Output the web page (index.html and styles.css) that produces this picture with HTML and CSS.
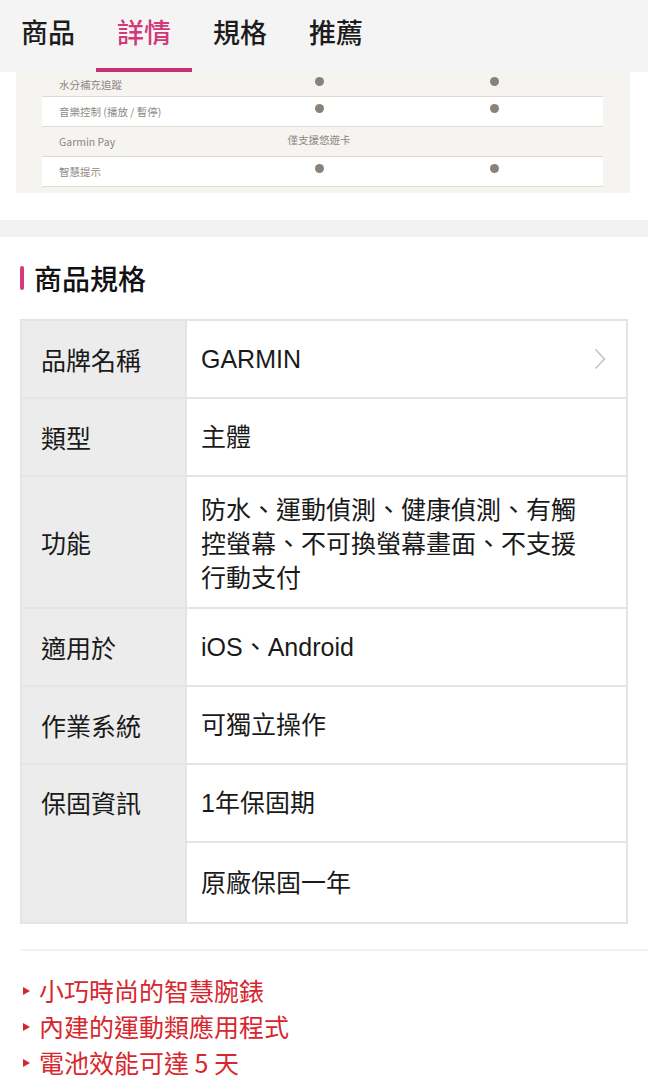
FILE: index.html
```html
<!DOCTYPE html>
<html lang="zh-Hant">
<head>
    <meta charset="UTF-8">
    <meta name="viewport" content="width=device-width, initial-scale=1.0">
    <title>商品規格</title>
    <link rel="stylesheet" href="styles.css">
</head>
<body>
    <!-- Tabs oben -->
    <nav class="tabs">
        <a class="tab">商品</a>
        <a class="tab active">詳情</a>
        <a class="tab">規格</a>
        <a class="tab">推薦</a>
    </nav>

    <!-- Vergleichstabelle (Bildausschnitt) -->
    <div class="compare">
        <div class="compare-row first">
            <span class="c-label">水分補充追蹤</span>
            <span class="c-val"><i class="dot"></i></span>
            <span class="c-val"><i class="dot"></i></span>
        </div>
        <div class="compare-row white">
            <span class="c-label">音樂控制 (播放 / 暫停)</span>
            <span class="c-val"><i class="dot"></i></span>
            <span class="c-val"><i class="dot"></i></span>
        </div>
        <div class="compare-row">
            <span class="c-label">Garmin Pay</span>
            <span class="c-val c-text">僅支援悠遊卡</span>
            <span class="c-val"></span>
        </div>
        <div class="compare-row white">
            <span class="c-label">智慧提示</span>
            <span class="c-val"><i class="dot"></i></span>
            <span class="c-val"><i class="dot"></i></span>
        </div>
    </div>

    <div class="divider-band"></div>

    <!-- Produktspezifikationen -->
    <section class="specs">
        <h2 class="section-title"><span class="title-bar"></span>商品規格</h2>

        <table class="spec-table">
            <tr>
                <th>品牌名稱</th>
                <td>
                    <div class="link-cell">
                        <span>GARMIN</span>
                        <svg class="chevron" width="12" height="22" viewBox="0 0 12 22">
                            <path d="M1.5 1.5 L10.5 11 L1.5 20.5" fill="none" stroke="#c4c4c4" stroke-width="1.6"/>
                        </svg>
                    </div>
                </td>
            </tr>
            <tr>
                <th>類型</th>
                <td>主體</td>
            </tr>
            <tr>
                <th>功能</th>
                <td class="multi">防水、運動偵測、健康偵測、有觸控螢幕、不可換螢幕畫面、不支援行動支付</td>
            </tr>
            <tr>
                <th>適用於</th>
                <td>iOS、Android</td>
            </tr>
            <tr>
                <th>作業系統</th>
                <td>可獨立操作</td>
            </tr>
            <tr>
                <th rowspan="2" class="top">保固資訊</th>
                <td>1年保固期</td>
            </tr>
            <tr class="last">
                <td>原廠保固一年</td>
            </tr>
        </table>

        <hr class="sep">

        <ul class="highlights">
            <li>小巧時尚的智慧腕錶</li>
            <li>內建的運動類應用程式</li>
            <li>電池效能可達 5 天</li>
        </ul>
    </section>
</body>
</html>
```

FILE: styles.css
```css
/* Grundlayout */
body {
    margin: 0;
    font-family: "Liberation Sans", "Noto Sans CJK TC", sans-serif;
    color: #1a1a1a;
    background: #ffffff;
    width: 648px;
    height: 1080px;
    overflow: hidden;
}

/* Tabs */
.tabs {
    display: flex;
    height: 72px;
    background-color: #f4f4f4;
    padding-left: 0;
    position: relative;
    z-index: 2;
}
.tab {
    width: 96px;
    box-sizing: border-box;
    display: flex;
    justify-content: center;
    align-items: center;
    padding-bottom: 6px;
    font-size: 27px;
    font-weight: 500;
    color: #1c1c1c;
    font-family: "Noto Sans CJK TC", sans-serif;
    border-bottom: 4px solid transparent;
}
.tab.active {
    color: #d2387a;
    border-bottom-color: #c93071;
}

/* Vergleich */
.compare {
    margin: 0 18px 0 16px;
    background-color: #f6f4f1;
    padding: 0 27px 6px 26px;
    font-family: "Noto Sans CJK TC", sans-serif;
    font-size: 10.5px;
    color: #8d8883;
}
.compare-row {
    display: grid;
    grid-template-columns: 202px 150px 200px;
    align-items: center;
    height: 29px;
    border-bottom: 1px solid #dedad4;
}
.compare-row.first {
    height: 24px;
}
.compare-row.white {
    background-color: #ffffff;
}
.c-label {
    padding-left: 17px;
}
.c-val {
    text-align: center;
    display: flex;
    justify-content: center;
}
.c-text {
    margin-top: -4px;
}
.dot {
    display: block;
    width: 9px;
    height: 9px;
    border-radius: 50%;
    background-color: #8a8179;
    margin-top: -6px;
}

.divider-band {
    height: 17px;
    margin-top: 27px;
    background-color: #f2f2f2;
}

/* Spezifikationen */
.specs {
    padding: 23px 0 0 20px;
}
.section-title {
    display: flex;
    align-items: center;
    margin: 0 0 23px 0;
    font-family: "Noto Sans CJK TC", sans-serif;
    font-size: 28px;
    font-weight: 500;
    line-height: 36px;
    color: #111;
}
.title-bar {
    width: 4px;
    height: 24px;
    border-radius: 2px;
    background-color: #d63a7c;
    margin-right: 10px;
}

.spec-table {
    width: 608px;
    border-collapse: collapse;
    border: 2px solid #e4e4e4;
    font-size: 25px;
    line-height: 34px;
}
.spec-table tr {
    height: 78px;
}
.spec-table th,
.spec-table td {
    border: 2px solid #e4e4e4;
    vertical-align: middle;
    text-align: left;
}
.spec-table th {
    width: 144px;
    background-color: #ececec;
    font-weight: normal;
    padding: 0 0 0 19px;
    font-family: "Noto Sans CJK TC", sans-serif;
}
.spec-table th.top {
    vertical-align: top;
    padding-top: 20px;
}
.spec-table td {
    padding: 0 20px 0 14px;
    background-color: #ffffff;
}
.spec-table td.multi {
    padding: 14px 34px 14px 14px;
    font-family: "Noto Sans CJK TC", sans-serif;
}
.spec-table tr.last {
    height: 81px;
}
.link-cell {
    display: flex;
    justify-content: space-between;
    align-items: center;
}

.sep {
    border: none;
    border-top: 2px solid #f2f2f2;
    margin: 25px 0 0 0;
}

/* Highlights */
.highlights {
    list-style: none;
    margin: 21px 0 0 0;
    padding: 0;
    color: #d8262e;
    font-family: "Noto Sans CJK TC", sans-serif;
    font-size: 25px;
    line-height: 36px;
}
.highlights li {
    display: flex;
    align-items: center;
}
.highlights li::before {
    content: "";
    width: 0;
    height: 0;
    border-top: 4px solid transparent;
    border-bottom: 4px solid transparent;
    border-left: 7px solid #d8262e;
    margin: 2px 9px 0 3px;
}
```
